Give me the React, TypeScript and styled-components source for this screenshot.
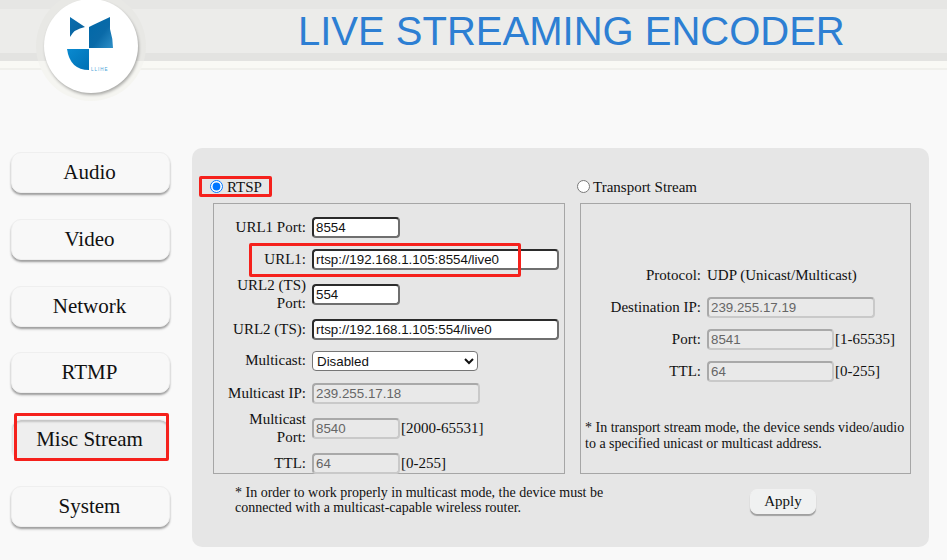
import React from "react";
import styled, { createGlobalStyle } from "styled-components";

const Global = createGlobalStyle`
  html, body { margin: 0; padding: 0; background: #f9f9f9; }
  body { width: 947px; height: 560px; overflow: hidden; font-family: "Liberation Serif", "Times New Roman", serif; font-size: 15px; color: #111; }
`;

const Page = styled.div`
  position: relative;
  width: 947px;
  height: 560px;
`;

const Header = styled.header`
  position: relative;
  height: 70px;
  box-sizing: border-box;
  padding: 9px 0 0 298px;
  background-image: linear-gradient(#e6e6e4 0 9px, #ececea 9px 53px, #e3e3e1 53px 61px, #f9f9f5 61px 68px, #f0f0ec 68px 70px);
`;

const Title = styled.h1`
  margin: 0;
  font: 400 40px/44px "Liberation Sans", Arial, sans-serif;
  color: #2d7fd3;
  white-space: nowrap;
`;

const LogoRing = styled.div`
  position: absolute;
  left: 36px;
  top: -9px;
  width: 110px;
  height: 110px;
  border-radius: 50%;
  background: linear-gradient(#e8e8e5 0 70px, #f5f5f1 70px);
  display: flex;
  align-items: center;
  justify-content: center;
`;

const LogoDisc = styled.div`
  width: 94px;
  height: 94px;
  border-radius: 50%;
  background: #fff;
  box-shadow: 1px 2px 3px rgba(0, 0, 0, 0.3);
  overflow: hidden;
  svg { display: block; }
`;

const Main = styled.main`
  display: flex;
  padding-top: 78px;
`;

const Side = styled.nav`
  width: 181px;
  margin-left: 11px;
  padding-top: 4px;
  display: flex;
  flex-direction: column;
  gap: 25.8px;
`;

const NavButton = styled.div<{ $active?: boolean }>`
  width: 159px;
  height: 41px;
  box-sizing: border-box;
  padding-right: 2px;
  border-radius: 10px;
  display: flex;
  align-items: center;
  justify-content: center;
  font-size: 21px;
  color: #111;
  background: ${(p) => (p.$active ? "#eeeeee" : "#f8f8f8")};
  border: 1px solid #efefef;
  box-shadow: ${(p) =>
    p.$active
      ? "inset 0 2px 2px rgba(0,0,0,0.18)"
      : "0 2px 2px rgba(0,0,0,0.32), 0 3px 3px rgba(0,0,0,0.06)"};
`;

const Panel = styled.section`
  width: 737px;
  height: 399px;
  box-sizing: border-box;
  border-radius: 10px;
  background: #e6e6e6;
  padding: 28px 18px 0 21px;
  display: grid;
  grid-template-columns: 352px 331px;
  column-gap: 15px;
  grid-template-rows: 27px 271px auto;
`;

const RadioLine = styled.label<{ $shift: number; $space: number }>`
  display: flex;
  align-items: center;
  margin-left: ${(p) => p.$shift}px;
  height: 21px;
  padding-top: 1px;
  input { margin: 0 ${(p) => p.$space}px 3px 0; width: 13px; height: 13px; }
`;

const Box = styled.div`
  border: 1px solid #a6a6a6;
  box-sizing: border-box;
  height: 271px;
`;

const LeftForm = styled(Box)`
  padding-top: 13px;
`;

const RightForm = styled(Box)`
  padding-top: 61px;
  position: relative;
`;

const Row = styled.div<{ $h: number; $after?: number; $label?: number }>`
  display: grid;
  grid-template-columns: ${(p) => p.$label ?? 92}px auto;
  column-gap: 6px;
  align-items: center;
  justify-content: start;
  height: ${(p) => p.$h}px;
  margin-bottom: ${(p) => p.$after ?? 0}px;
`;

const Label = styled.div`
  text-align: right;
  line-height: 17.5px;
`;

const Field = styled.div`
  display: flex;
  align-items: center;
  gap: 1px;
  white-space: nowrap;
`;

const TextInput = styled.input<{ $w: number }>`
  width: ${(p) => p.$w}px;
  height: 21px;
  box-sizing: border-box;
  padding: 1px 2px;
  margin: 0;
  border-radius: 4px;
  border-width: 2px;
  border-style: solid;
  border-color: #2b2b2b #6f6f6f #6f6f6f #2b2b2b;
  background: #fff;
  color: #111;
  font: 13.33px "Liberation Sans", Arial, sans-serif;
  outline: none;
  &:disabled {
    border-color: #a9a9a9 #c9c9c9 #c9c9c9 #a9a9a9;
    background: #e9e9e9;
    color: #666;
  }
`;

const Select = styled.select`
  width: 166px;
  height: 20px;
  box-sizing: border-box;
  margin: 0;
  border: 1px solid #767676;
  border-radius: 4px;
  background: #fff;
  color: #111;
  font: 13.33px "Liberation Sans", Arial, sans-serif;
`;

const BoxNote = styled.p`
  position: absolute;
  left: 4px;
  top: 216px;
  margin: 0;
  font-size: 14px;
  line-height: 16px;
  white-space: nowrap;
`;

const Note = styled.p`
  margin: 11px 0 0 22px;
  font-size: 14px;
  line-height: 15px;
  white-space: nowrap;
`;

const ApplyCell = styled.div`
  display: flex;
  padding: 15px 0 0 170px;
  align-items: flex-start;
`;

const Apply = styled.div`
  width: 66px;
  height: 25px;
  box-sizing: border-box;
  border-radius: 7px;
  border: 1px solid #f1f1f1;
  background: #f0f1f1;
  box-shadow: 0 2px 1px rgba(0, 0, 0, 0.3);
  display: flex;
  align-items: center;
  justify-content: center;
  font-size: 15px;
`;

const Mark = styled.div<{ $l: number; $t: number; $w: number; $h: number }>`
  position: absolute;
  left: ${(p) => p.$l}px;
  top: ${(p) => p.$t}px;
  width: ${(p) => p.$w}px;
  height: ${(p) => p.$h}px;
  box-sizing: border-box;
  border: 3px solid #f5211c;
  border-radius: 2px;
  pointer-events: none;
`;

const Logo = () => (
  <svg width="94" height="94" viewBox="44 0 94 94">
    <defs>
      <linearGradient id="g1" x1="0" y1="0" x2="1" y2="1">
        <stop offset="0" stopColor="#0a6fb0" />
        <stop offset="1" stopColor="#0a5f98" />
      </linearGradient>
      <linearGradient id="g2" x1="0" y1="0" x2="1" y2="1">
        <stop offset="0" stopColor="#0068a8" />
        <stop offset="0.55" stopColor="#0a6aa8" />
        <stop offset="1" stopColor="#2f90c8" />
      </linearGradient>
      <linearGradient id="g3" x1="0" y1="0" x2="1" y2="1">
        <stop offset="0" stopColor="#0a8ad0" />
        <stop offset="1" stopColor="#0070b4" />
      </linearGradient>
    </defs>
    <path d="M70 18 L85 28 Q74 30 70 38 Z" fill="url(#g1)" />
    <path d="M89 28 L93 26 L110 18 L110 30 Q113 40 113 49 L89 49 Z" fill="url(#g2)" />
    <path d="M67 50 L89 50 L89 71 Q70 71 67 50 Z" fill="url(#g3)" />
    <text x="91" y="72" fontSize="4.5" letterSpacing="1" fill="#4aa3d8" fontFamily="Liberation Sans, sans-serif">LLIHE</text>
  </svg>
);

export default function App() {
  return (
    <Page>
      <Global />
      <Header>
        <Title>LIVE STREAMING ENCODER</Title>
        <LogoRing>
          <LogoDisc>
            <Logo />
          </LogoDisc>
        </LogoRing>
      </Header>
      <Main>
        <Side>
          <NavButton>Audio</NavButton>
          <NavButton>Video</NavButton>
          <NavButton>Network</NavButton>
          <NavButton>RTMP</NavButton>
          <NavButton $active>Misc Stream</NavButton>
          <NavButton>System</NavButton>
        </Side>
        <Panel>
          <RadioLine $shift={-3} $space={4}>
            <input type="radio" name="mode" defaultChecked />
            RTSP
          </RadioLine>
          <RadioLine $shift={-3} $space={3}>
            <input type="radio" name="mode" />
            Transport Stream
          </RadioLine>
          <LeftForm>
            <Row $h={21} $after={11}>
              <Label>URL1 Port:</Label>
              <Field><TextInput $w={88} defaultValue="8554" /></Field>
            </Row>
            <Row $h={21} $after={7}>
              <Label>URL1:</Label>
              <Field><TextInput $w={247} defaultValue="rtsp://192.168.1.105:8554/live0" /></Field>
            </Row>
            <Row $h={34} $after={8}>
              <Label>URL2 (TS)<br />Port:</Label>
              <Field><TextInput $w={88} defaultValue="554" /></Field>
            </Row>
            <Row $h={21} $after={11}>
              <Label>URL2 (TS):</Label>
              <Field><TextInput $w={247} defaultValue="rtsp://192.168.1.105:554/live0" /></Field>
            </Row>
            <Row $h={20} $after={12}>
              <Label>Multicast:</Label>
              <Field>
                <Select defaultValue="Disabled">
                  <option>Disabled</option>
                </Select>
              </Field>
            </Row>
            <Row $h={21} $after={7}>
              <Label>Multicast IP:</Label>
              <Field><TextInput $w={168} disabled defaultValue="239.255.17.18" /></Field>
            </Row>
            <Row $h={34} $after={8}>
              <Label>Multicast<br />Port:</Label>
              <Field><TextInput $w={88} disabled defaultValue="8540" />[2000-65531]</Field>
            </Row>
            <Row $h={21}>
              <Label>TTL:</Label>
              <Field><TextInput $w={88} disabled defaultValue="64" />[0-255]</Field>
            </Row>
          </LeftForm>
          <RightForm>
            <Row $h={21} $after={11} $label={120}>
              <Label>Protocol:</Label>
              <Field>UDP (Unicast/Multicast)</Field>
            </Row>
            <Row $h={21} $after={11} $label={120}>
              <Label>Destination IP:</Label>
              <Field><TextInput $w={168} disabled defaultValue="239.255.17.19" /></Field>
            </Row>
            <Row $h={21} $after={11} $label={120}>
              <Label>Port:</Label>
              <Field><TextInput $w={127} disabled defaultValue="8541" />[1-65535]</Field>
            </Row>
            <Row $h={21} $label={120}>
              <Label>TTL:</Label>
              <Field><TextInput $w={127} disabled defaultValue="64" />[0-255]</Field>
            </Row>
            <BoxNote>
              * In transport stream mode, the device sends video/audio
              <br />
              to a specified unicast or multicast address.
            </BoxNote>
          </RightForm>
          <Note>
            * In order to work properly in multicast mode, the device must be
            <br />
            connected with a multicast-capable wireless router.
          </Note>
          <ApplyCell>
            <Apply>Apply</Apply>
          </ApplyCell>
        </Panel>
      </Main>
      <Mark $l={199} $t={176} $w={73} $h={21} />
      <Mark $l={249} $t={243} $w={272} $h={34} />
      <Mark $l={14} $t={413} $w={155} $h={48} />
    </Page>
  );
}
